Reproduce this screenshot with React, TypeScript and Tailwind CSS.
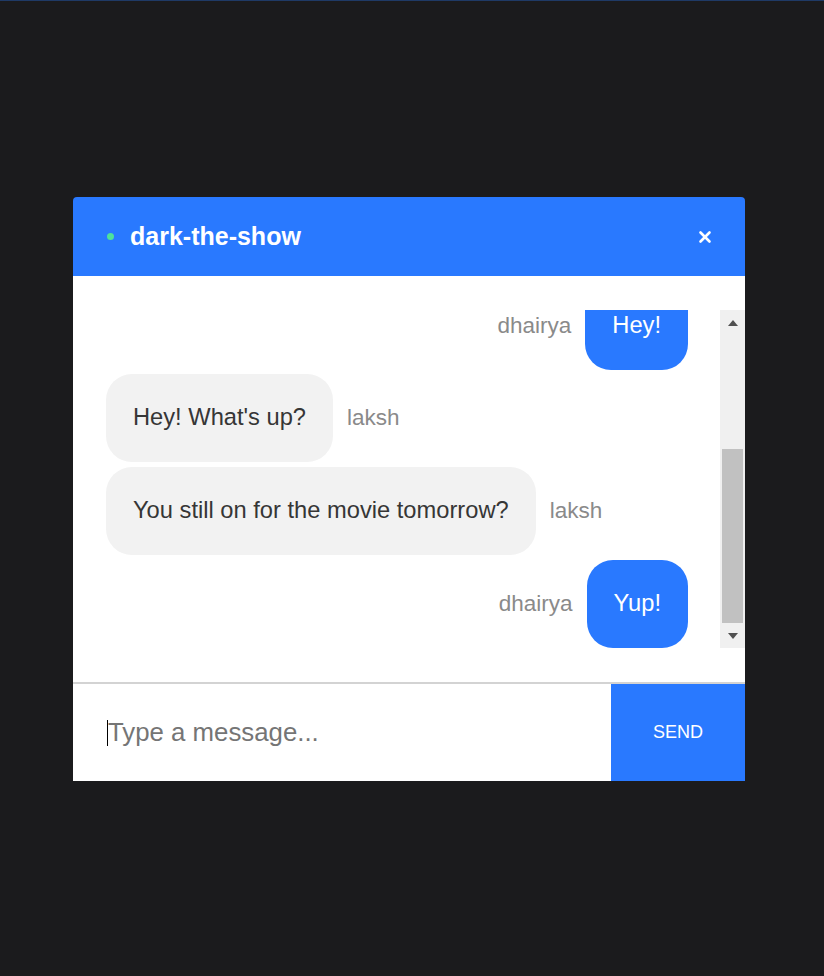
import { X } from "lucide-react";

interface Message {
  id: number;
  author: string;
  text: string;
  mine: boolean;
  spacing: string;
}

const messages: Message[] = [
  { id: 1, author: "dhairya", text: "Hey!", mine: true, spacing: "mt-0" },
  { id: 2, author: "laksh", text: "Hey! What's up?", mine: false, spacing: "mt-[4px]" },
  { id: 3, author: "laksh", text: "You still on for the movie tomorrow?", mine: false, spacing: "mt-[5px]" },
  { id: 4, author: "dhairya", text: "Yup!", mine: true, spacing: "mt-[5px]" },
];

const MessageRow = ({ msg }: { msg: Message }) => {
  if (msg.mine) {
    return (
      <div className={`flex items-center justify-end gap-[14px] shrink-0 ${msg.spacing}`}>
        <span className="text-[22.5px] text-[#8a8a8a]">{msg.author}</span>
        <div className="h-[88px] flex items-center px-[27px] rounded-[26px] bg-[#2979ff] text-white text-[23.7px]">
          {msg.text}
        </div>
      </div>
    );
  }
  return (
    <div className={`flex items-center justify-start gap-[14px] shrink-0 ${msg.spacing}`}>
      <div className="h-[88px] flex items-center px-[27px] rounded-[26px] bg-[#f2f2f2] text-[#363636] text-[23.7px]">
        {msg.text}
      </div>
      <span className="text-[22.5px] text-[#8a8a8a]">{msg.author}</span>
    </div>
  );
};

const FakeScrollbar = () => (
  <div className="w-[25px] shrink-0 bg-[#f0f0f0] flex flex-col">
    <div className="h-[25px] flex items-center justify-center">
      <svg width="10" height="6" viewBox="0 0 10 6">
        <path d="M0 6 L5 0 L10 6 Z" fill="#505050" />
      </svg>
    </div>
    <div className="flex-1 flex flex-col justify-end px-[2px]">
      <div className="h-[174px] bg-[#c1c1c1]" />
    </div>
    <div className="h-[25px] flex items-center justify-center">
      <svg width="10" height="6" viewBox="0 0 10 6">
        <path d="M0 0 L10 0 L5 6 Z" fill="#505050" />
      </svg>
    </div>
  </div>
);

export default function App() {
  return (
    <div className="h-[976px] w-full bg-[#1b1b1d] border-t border-[#1f3a66] font-['Liberation_Sans',Arial,sans-serif] overflow-hidden">
      <div className="ml-[73px] mt-[196px] w-[672px] flex flex-col">
        {/* Header */}
        <div className="h-[79px] bg-[#2979ff] rounded-t-[4px] flex items-center pl-[34px] pr-[31px]">
          <div className="flex items-center flex-1">
            <span className="w-[7px] h-[7px] rounded-full bg-[#4ee29a]" />
            <span className="ml-[16px] text-white font-bold text-[25px]">dark-the-show</span>
          </div>
          <X className="w-[18px] h-[18px] text-white" strokeWidth={3.5} />
        </div>

        {/* Messages */}
        <div className="bg-white py-[34px] flex">
          <div className="flex-1 h-[338px] overflow-hidden flex flex-col justify-end pl-[33px] pr-[32px]">
            {messages.map((m) => (
              <MessageRow key={m.id} msg={m} />
            ))}
          </div>
          <FakeScrollbar />
        </div>

        {/* Input */}
        <div className="flex border-t-2 border-[#d3d3d3] bg-white h-[99px]">
          <div className="flex-1 flex items-center pl-[34px]">
            <span className="w-px h-[26px] bg-black" />
            <input
              placeholder="Type a message..."
              className="flex-1 h-full text-[25.8px] text-[#333] placeholder:text-[#757575] outline-none bg-white"
            />
          </div>
          <button className="w-[134px] bg-[#2979ff] text-white text-[18px]">SEND</button>
        </div>
      </div>
    </div>
  );
}
